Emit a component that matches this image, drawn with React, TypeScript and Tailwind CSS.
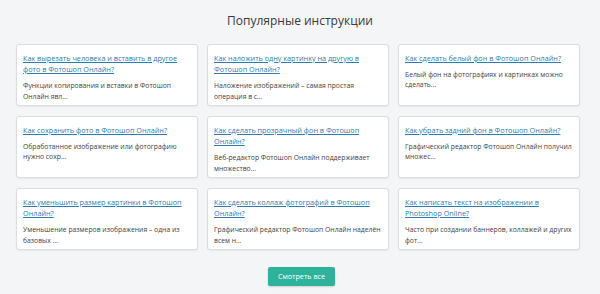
const items = [
  {
    title: 'Как вырезать человека и вставить в другое фото в Фотошоп Онлайн?',
    text: 'Функции копирования и вставки в Фотошоп Онлайн явл...',
  },
  {
    title: 'Как наложить одну картинку на другую в Фотошоп Онлайн?',
    text: 'Наложение изображений – самая простая операция в с...',
  },
  {
    title: 'Как сделать белый фон в Фотошоп Онлайн?',
    text: 'Белый фон на фотографиях и картинках можно сделать...',
  },
  {
    title: 'Как сохранить фото в Фотошоп Онлайн?',
    text: 'Обработанное изображение или фотографию нужно сохр...',
  },
  {
    title: 'Как сделать прозрачный фон в Фотошоп Онлайн?',
    text: 'Веб-редактор Фотошоп Онлайн поддерживает множество...',
  },
  {
    title: 'Как убрать задний фон в Фотошоп Онлайн?',
    text: 'Графический редактор Фотошоп Онлайн получил множес...',
  },
  {
    title: 'Как уменьшить размер картинки в Фотошоп Онлайн?',
    text: 'Уменьшение размеров изображения – одна из базовых ...',
  },
  {
    title: 'Как сделать коллаж фотографий в Фотошоп Онлайн?',
    text: 'Графический редактор Фотошоп Онлайн наделён всем н...',
  },
  {
    title: 'Как написать текст на изображении в Photoshop Online?',
    text: 'Часто при создании баннеров, коллажей и других фот...',
  },
]

export default function App() {
  return (
    <div className="w-[600px] h-[294px] bg-[#f4f5f7] font-['Open_Sans',sans-serif] overflow-hidden">
      <h2 className="pt-[12px] h-[44px] text-center text-[12px] leading-[18px] text-[#3a3a3a]">
        Популярные инструкции
      </h2>

      <div className="ml-4 w-[564px] grid grid-cols-3 gap-x-[9px] gap-y-[10px]">
        {items.map(item => (
          <div
            key={item.title}
            className="h-[62px] bg-white border border-[#dcdde0] rounded-[3px] shadow-[0_1px_2px_rgba(0,0,0,0.06)] px-[6px] pt-[7.5px]"
          >
            <a
              href="#"
              className="block text-[7.25px] leading-[11.7px] text-[#2e7cae] underline underline-offset-[1px]"
            >
              {item.title}
            </a>
            <p className="mt-[5.5px] text-[6.8px] leading-[10.5px] text-[#444]">
              {item.text}
            </p>
          </div>
        ))}
      </div>

      <div className="flex justify-center mt-[17px] pl-[3px]">
        <button className="w-[67px] h-[19px] rounded-[2px] bg-[#2db29b] text-white text-[7.2px] leading-none shadow-[0_1px_2px_rgba(0,0,0,0.15)]">
          Смотреть все
        </button>
      </div>
    </div>
  )
}
